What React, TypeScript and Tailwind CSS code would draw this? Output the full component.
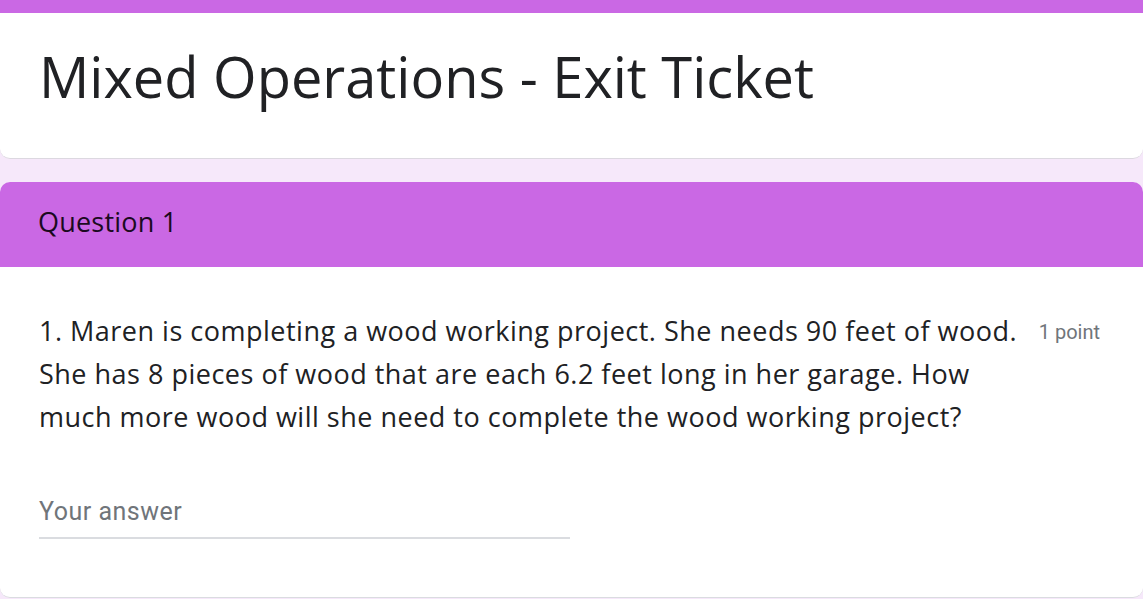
import React from 'react';

// Google Forms style exit ticket, zoomed in
const App: React.FC = () => {
  return (
    <div className="w-[1143px] h-[599px] overflow-hidden bg-[#f6e8fa] flex flex-col">
      {/* Title card */}
      <div className="bg-white rounded-b-[10px] border-b border-[#dcd8e0] flex flex-col">
        <div className="h-[13px] bg-[#ca68e4]" />
        <div className="h-[145px] pl-[39px] pt-[31px]">
          <h1
            className="text-[#202124] text-[56px] leading-[64px]"
            style={{ fontFamily: '"Open Sans", "Noto Sans", sans-serif' }}
          >
            Mixed Operations - Exit Ticket
          </h1>
        </div>
      </div>

      <div className="h-[23px]" />

      {/* Question section */}
      <div className="flex flex-col bg-white rounded-[10px] border-b border-[#dadce0] h-[416px]">
        <div className="h-[85px] bg-[#ca68e4] rounded-t-[10px] flex items-center pl-[38px] pb-[4px]">
          <span
            className="text-[#1b0a20] text-[27px] tracking-[0.2px]"
            style={{ fontFamily: '"Open Sans", "Noto Sans", sans-serif' }}
          >
            Question 1
          </span>
        </div>

        <div className="flex items-start pl-[39px] pt-[42px] pr-[43px] gap-[8px]">
          <p
            className="flex-1 whitespace-nowrap text-[#202124] text-[27px] leading-[43px] tracking-[0.5px]"
            style={{ fontFamily: '"Open Sans", "Noto Sans", sans-serif' }}
          >
            1. Maren is completing a wood working project. She needs 90 feet of wood.
            <br />
            She has 8 pieces of wood that are each 6.2 feet long in her garage. How
            <br />
            much more wood will she need to complete the wood working project?
          </p>
          <span
            className="mt-[8px] text-[#70757a] text-[20px] whitespace-nowrap"
            style={{ fontFamily: 'Roboto, "Noto Sans", sans-serif' }}
          >
            1 point
          </span>
        </div>

        <div className="pl-[39px] pt-[55px]">
          <div className="w-[531px] border-b-2 border-[#dadce0] pb-[6px]">
            <span
              className="text-[#70757a] text-[25px] tracking-[0.5px]"
              style={{ fontFamily: 'Roboto, "Noto Sans", sans-serif' }}
            >
              Your answer
            </span>
          </div>
        </div>
      </div>
    </div>
  );
};

export default App;
